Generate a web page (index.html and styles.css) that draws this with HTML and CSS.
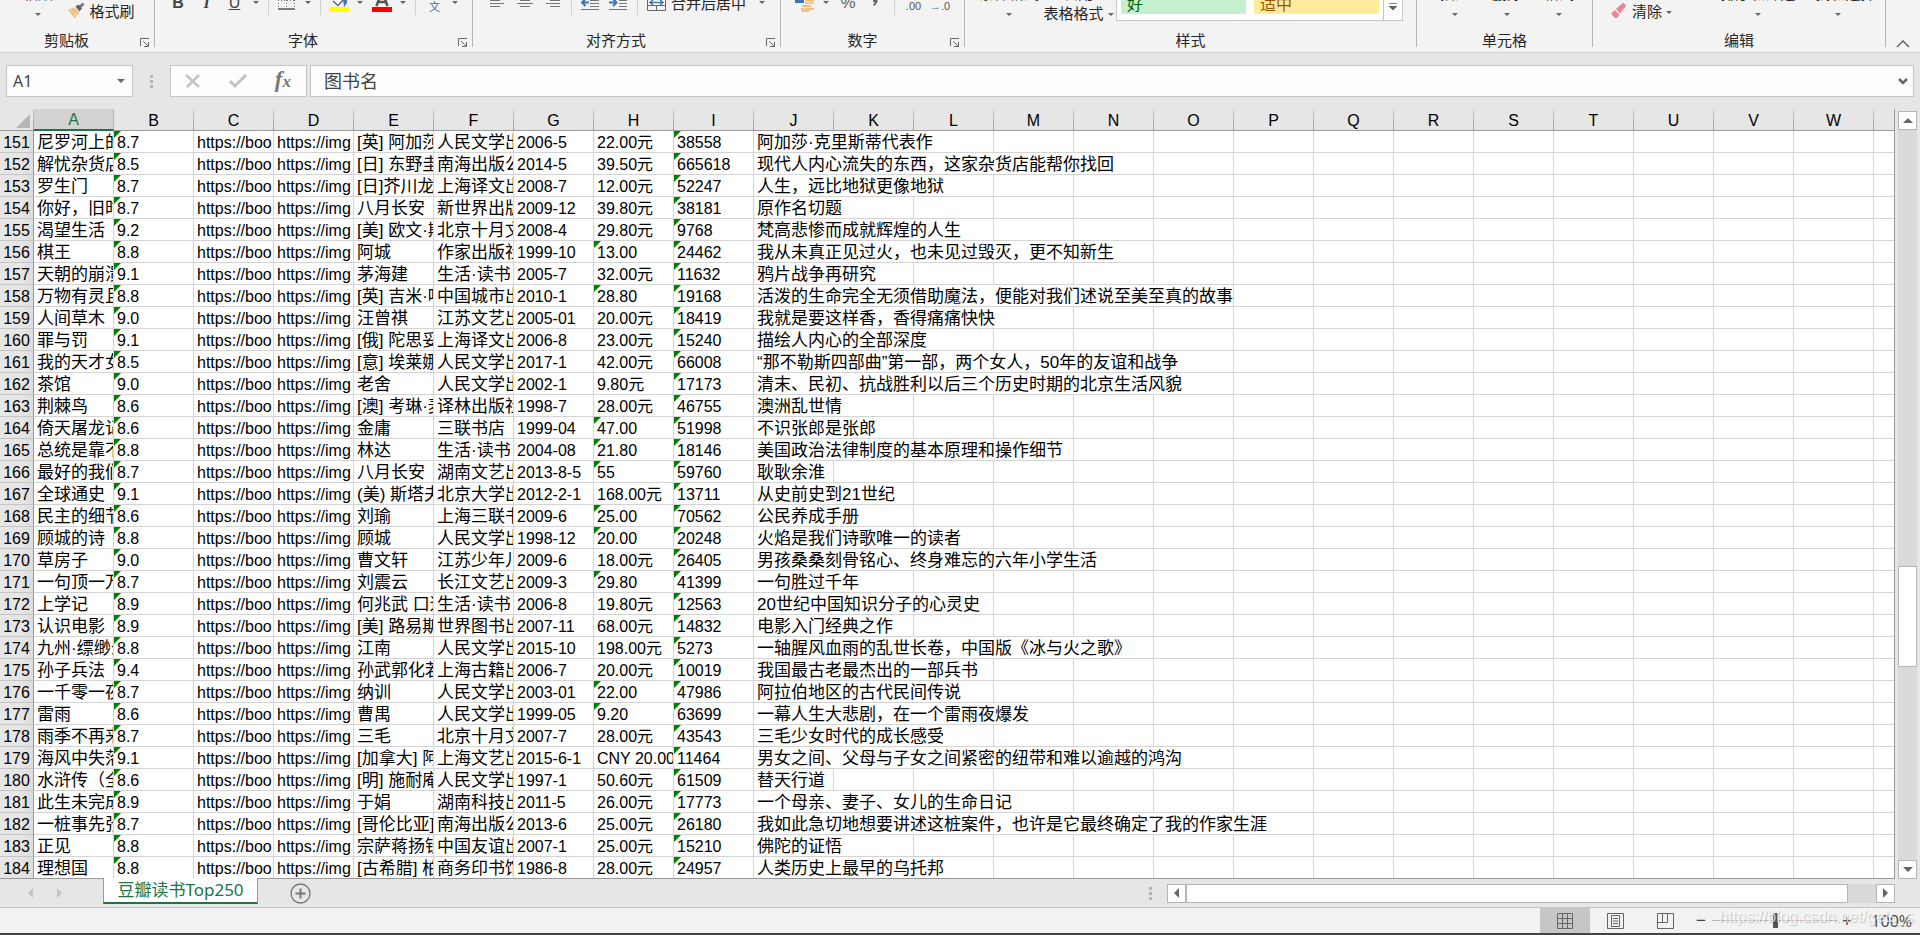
FILE: index.html
```html
<!DOCTYPE html>
<html lang="zh-CN">
<head>
<meta charset="utf-8">
<title>豆瓣读书Top250</title>
<link rel="stylesheet" href="styles.css">
</head>
<body>
<header class="ribbon">
  <section class="group group-clipboard">
    <div class="tools">
      <button class="stack"><span>粘贴</span><i class="caret"></i></button>
      <span></span>
      <button class="labelled">
        <svg class="icon" width="18" height="20" viewBox="0 0 18 20"><path d="M1 9.500 7.500 7.500l5 5-5 6z" fill="#eec07c"/><path d="M3 10l8 5M6 17l5-5" stroke="#f8dcae" stroke-width="1"/><path d="M8.500 6.500l3-2 3.500 4-2.500 3z" fill="#5f5f5f"/><path d="M12 6l3.500-3.500 2 2L14 8z" fill="#777"/></svg>
        <span>格式刷</span>
      </button>
    </div>
    <h2>剪贴板</h2>
    <button class="launcher" aria-label="剪贴板设置"><svg width="10" height="9" viewBox="0 0 10 9"><path d="M.5 8V.5H9M3 3l5 5M8.500 4v4.500H4" fill="none" stroke="#666"/></svg></button>
  </section>
  <section class="group group-font">
    <div class="tools">
      <button class="glyph bold">B</button>
      <button class="glyph italic">I</button>
      <button class="glyph underline">U</button>
      <i class="caret high"></i><i class="sep"></i>
      <button aria-label="边框"><svg class="icon" width="18" height="20" viewBox="0 0 18 20"><path d="M1.500 0v8M9.500 0v8M17.500 0v8M1 .5h16" stroke="#777" stroke-dasharray="1 2"/><path d="M1 9h17" stroke="#555" stroke-width="1.500"/></svg></button>
      <i class="caret high"></i><i class="sep"></i>
      <button aria-label="填充颜色"><svg class="icon" width="20" height="20" viewBox="0 0 20 20"><path d="M4 1l5 4.500L15-1" fill="#fff" stroke="#666" stroke-width="1.500"/><path d="M14-1l4 1v3l-3 4z" fill="#3f74b5"/><path d="M0 7h20v5H0z" fill="#ff0"/></svg></button>
      <i class="caret high"></i>
      <button aria-label="字体颜色"><svg class="icon" width="20" height="20" viewBox="0 0 20 20"><path d="M4.500 6L7-1M15.500 6L13-1M6 2h8" fill="none" stroke="#555" stroke-width="2.500"/><path d="M0 7h20v5H0z" fill="#f00"/></svg></button>
      <i class="caret high"></i><i class="sep"></i>
      <button class="phonetic">文</button>
      <i class="caret high"></i>
    </div>
    <h2>字体</h2>
    <button class="launcher" aria-label="字体设置"><svg width="10" height="9" viewBox="0 0 10 9"><path d="M.5 8V.5H9M3 3l5 5M8.500 4v4.500H4" fill="none" stroke="#666"/></svg></button>
  </section>
  <section class="group group-align">
    <div class="tools">
      <button aria-label="左对齐"><svg class="icon" width="14" height="20" viewBox="0 0 14 20"><path d="M0 .5h10M0 3.500h14M0 6.500h10" stroke="#777"/></svg></button>
      <button aria-label="居中"><svg class="icon" width="16" height="20" viewBox="0 0 16 20"><path d="M3 .5h10M0 3.500h16M3 6.500h10" stroke="#777"/></svg></button>
      <button aria-label="右对齐"><svg class="icon" width="14" height="20" viewBox="0 0 14 20"><path d="M4 .5h10M0 3.500h14M4 6.500h10" stroke="#777"/></svg></button>
      <i class="sep"></i>
      <button aria-label="减少缩进"><svg class="icon" width="18" height="20" viewBox="0 0 18 20"><path d="M9 0.500h9M9 3.500h9M9 6.500h9M0 9.500h18" stroke="#777"/><path d="M8 2.500H2M4.500-1L1 2.500 4.500 6" fill="none" stroke="#3f74b5" stroke-width="2"/></svg></button>
      <button aria-label="增加缩进"><svg class="icon" width="18" height="20" viewBox="0 0 18 20"><path d="M10 .5h8M10 3.500h8M10 6.500h8M0 9.500h18" stroke="#777"/><path d="M0 2.500h7M4-1l3.500 3.500L4 6" fill="none" stroke="#3f74b5" stroke-width="2"/></svg></button>
      <i class="sep"></i>
      <button aria-label="合并"><svg class="icon" width="19" height="20" viewBox="0 0 19 20"><path d="M.5 0v10.500h18V0M.5 5.500h18M9.500 6v5" fill="none" stroke="#666"/><path d="M1 0h17v5H1z" fill="#fff"/><path d="M3 2.500h13M6 0L3 2.500 6 5M13 0l3 2.500L13 5" fill="none" stroke="#3f74b5" stroke-width="1.500"/></svg></button>
      <button class="merge-label">合并后居中</button>
      <i class="caret high"></i>
    </div>
    <h2>对齐方式</h2>
    <button class="launcher" aria-label="对齐设置"><svg width="10" height="9" viewBox="0 0 10 9"><path d="M.5 8V.5H9M3 3l5 5M8.500 4v4.500H4" fill="none" stroke="#666"/></svg></button>
  </section>
  <section class="group group-number">
    <div class="tools">
      <button aria-label="会计格式"><svg class="icon" width="19" height="20" viewBox="0 0 19 20"><path d="M0-1h9v4H0z" fill="#3f74b5"/><path d="M10 0h9v4h-9zM7 5h9v2H7zM10 8h9v2h-9zM6 8h3v3H6zM7 10h7v2H7z" fill="#edbf79"/><path d="M10 2h9M7 7.500h10" stroke="#fbe6c3"/></svg></button>
      <i class="caret high"></i>
      <button class="glyph percent">%</button>
      <button aria-label="千位分隔"><svg class="icon" width="8" height="20" viewBox="0 0 8 20"><path d="M2-1h4.500v3L3.500 6 2 5l2-3H2z" fill="#666"/></svg></button>
      <i class="sep"></i>
      <button class="decimal">.00</button>
      <button class="decimal"><b>→</b>.0</button>
    </div>
    <h2>数字</h2>
    <button class="launcher" aria-label="数字设置"><svg width="10" height="9" viewBox="0 0 10 9"><path d="M.5 8V.5H9M3 3l5 5M8.500 4v4.500H4" fill="none" stroke="#666"/></svg></button>
  </section>
  <section class="group group-style">
    <div class="tools">
      <button class="stack"><span>条件格式</span><i class="caret"></i></button>
      <button class="two-line"><span>套用</span><span>表格格式<i class="caret"></i></span></button>
      <div class="gallery">
        <button class="swatch good">好</button>
        <button class="swatch neutral">适中</button>
        <button class="more" aria-label="更多样式"><i class="caret"></i></button>
      </div>
    </div>
    <h2>样式</h2>
  </section>
  <section class="group group-cells">
    <div class="tools">
      <button class="stack"><span>插入</span><i class="caret"></i></button>
      <button class="stack"><span>删除</span><i class="caret"></i></button>
      <button class="stack"><span>格式</span><i class="caret"></i></button>
    </div>
    <h2>单元格</h2>
  </section>
  <section class="group group-edit">
    <div class="tools">
      <button class="labelled">
        <svg class="icon" width="18" height="20" viewBox="0 0 18 20"><path d="M6 9l6-5.500q1.500-1 3 .5t.5 3L10 13.500zM5 10l4.500 5L7.500 17.500Q6 19 4.500 17.500L2 15q-1-1.500 0-2.500z" fill="#e8879b"/></svg>
        <span>清除</span><i class="caret"></i>
      </button>
      <span></span>
      <button class="stack"><span>排序和筛选</span><i class="caret"></i></button>
      <button class="stack"><span>查找和选择</span><i class="caret"></i></button>
    </div>
    <h2>编辑</h2>
  </section>
  <button class="collapse" aria-label="折叠功能区"><svg width="14" height="8" viewBox="0 0 14 8"><path d="M1 7l6-6 6 6" fill="none" stroke="#555" stroke-width="1.300"/></svg></button>
</header>

<div class="formula-bar">
  <div class="name-box"><input aria-label="名称框" value="A1"><i class="caret"></i></div>
  <i class="grip"></i>
  <div class="formula-actions">
    <button aria-label="取消"><svg width="16" height="14" viewBox="0 0 16 14"><path d="M1 1l13 12M14 1L2 13" stroke="#c3c3c3" stroke-width="2.500"/></svg></button>
    <button aria-label="输入"><svg width="18" height="14" viewBox="0 0 18 14"><path d="M1 7l5 5L17 1" fill="none" stroke="#c3c3c3" stroke-width="3"/></svg></button>
    <button class="fx"><span>f</span><small>x</small></button>
  </div>
  <div class="formula-field">
    <input aria-label="编辑栏" value="图书名">
    <button aria-label="展开编辑栏"><svg width="10" height="7" viewBox="0 0 10 7"><path d="M1 1l4 4 4-4" fill="none" stroke="#666" stroke-width="2.500"/></svg></button>
  </div>
</div>

<main class="workspace">
  <div class="sheet">
    <table>
      <colgroup id="cols"><col class="row-col"></colgroup>
      <thead><tr id="head"><th class="corner"><svg width="14" height="14" viewBox="0 0 14 14"><path d="M14 0v14H0z" fill="#b5b5b5"/></svg></th></tr></thead>
      <tbody id="rows"></tbody>
    </table>
  </div>
  <div class="vscroll">
    <button aria-label="向上"><i class="tri up"></i></button>
    <div class="track"><span class="before"></span><span class="thumb"></span><span class="after"></span></div>
    <button aria-label="向下"><i class="tri down"></i></button>
  </div>
</main>

<nav class="tab-bar">
  <button class="tab-nav" aria-label="上一张"><i class="tri left"></i></button>
  <button class="tab-nav" aria-label="下一张"><i class="tri right"></i></button>
  <button class="sheet-tab">豆瓣读书Top250</button>
  <button class="add-sheet" aria-label="新工作表"><svg width="21" height="21" viewBox="0 0 21 21"><circle cx="10.500" cy="10.500" r="9.500" fill="none" stroke="#777" stroke-width="1.300"/><path d="M10.500 5.500v10M5.500 10.500h10" stroke="#777" stroke-width="2"/></svg></button>
  <i class="grip"></i>
  <div class="hscroll">
    <button aria-label="向左"><i class="tri left"></i></button>
    <div class="track"><span class="thumb"></span></div>
    <button aria-label="向右"><i class="tri right"></i></button>
  </div>
</nav>

<footer class="status-bar">
  <button class="view active" aria-label="普通"><svg width="16" height="16" viewBox="0 0 16 16"><path d="M.5.5h15v15H.5zM5.500 0v16M10.500 0v16M0 5.500h16M0 10.500h16" fill="none" stroke="#666"/></svg></button>
  <button class="view" aria-label="页面布局"><svg width="17" height="16" viewBox="0 0 17 16"><path d="M.5.5h16v15H.5zM4.500 2.500h8v11h-8zM6 5.500h5M6 8h5M6 10.500h5" fill="none" stroke="#666"/></svg></button>
  <button class="view" aria-label="分页预览"><svg width="17" height="16" viewBox="0 0 17 16"><path d="M.5.5h16v15H.5zM.5 9.500h10V.5M5.500.5v9" fill="none" stroke="#666"/></svg></button>
  <div class="zoom">
    <button aria-label="缩小">−</button>
    <input type="range" min="0" max="100" value="50" aria-label="缩放">
    <button aria-label="放大">+</button>
    <output>100%</output>
  </div>
  <span class="watermark">https://blog.csdn.net/gets_s</span>
</footer>
<script src="sheet.js"></script>
</body>
</html>
```
FILE: styles.css
```css
* { box-sizing: border-box; }
body {
  margin: 0;
  height: 100vh;
  display: flex;
  flex-direction: column;
  overflow: hidden;
  background: #e6e6e6;
  color: #262626;
  font-family: "Noto Sans CJK SC", sans-serif;
  font-size: 15px;
  border-bottom: 2px solid #444;
}
button {
  margin: 0;
  padding: 0;
  border: 0;
  background: none;
  color: inherit;
  font: inherit;
}
svg { display: block; overflow: visible; }
input { min-width: 0; border: 0; outline: 0; background: none; }

.caret {
  display: inline-block;
  flex: none;
  border: 3px solid transparent;
  border-top-color: #666;
  border-bottom: 0;
}
.caret.high { margin-bottom: 16px; }
.sep { width: 1px; height: 15px; margin-bottom: 5px; background: #d0d0d0; }
.grip { width: 3px; height: 13px; background: repeating-linear-gradient(#b5b5b5 0 3px, transparent 3px 5px); }

/* Ribbon: the upper part of each tool row runs off the top of the window */
.ribbon {
  display: flex;
  flex: none;
  height: 53px;
  overflow: hidden;
  background: #f3f3f3;
  border-bottom: 1px solid #d0d0d0;
}
.group { position: relative; flex: none; height: 47px; border-right: 1px solid #b5b5b5; }
.tools { display: grid; align-items: end; justify-items: center; height: 20px; grid-template-rows: 20px; }
.group h2 { margin: 9px 0 0; font-size: 15px; font-weight: 400; line-height: 21px; text-align: center; }
.launcher { position: absolute; right: 4px; bottom: 0; }
.group-clipboard h2, .group-font h2, .group-align h2 { padding-right: 21px; }
.group-number h2 { padding-right: 20px; }

.group-clipboard { width: 155px; }
.group-clipboard .tools { padding-left: 18px; grid-template-columns: 40px 6px 74px; }
.group-font { width: 318px; }
.group-font .tools { padding-left: 9px; grid-template-columns: 28px 29px 27px 16px 8px 28px 16px 8px 29px 14px 30px 12px 12px 27px 14px; }
.group-align { width: 308px; }
.group-align .tools { padding-left: 10px; grid-template-columns: 28px 28px 28px 8px 29px 28px 11px 27px 77px 30px; }
.group-number { width: 184px; }
.group-number .tools { padding-left: 10px; grid-template-columns: 27px 16px 28px 26px 12px 27px 26px; }
.group-style { width: 452px; }
.group-style .tools { padding-left: 12px; grid-template-columns: 64px 75px 287px; }
.group-cells { width: 176px; }
.group-cells .tools { padding-left: 12px; grid-template-columns: 52px 52px 52px; }
.group-edit { width: 293px; }
.group-edit .tools { padding-left: 12px; grid-template-columns: 72px 41px 80px 80px; }

.stack { display: flex; flex-direction: column; align-items: center; gap: 10px; line-height: 20px; padding-bottom: 4px; white-space: nowrap; }
.labelled { display: flex; align-items: center; gap: 4px; line-height: 20px; white-space: nowrap; }
.labelled span { margin-bottom: -2px; }
.labelled .caret { margin-top: 5px; }
.two-line { display: flex; flex-direction: column; align-items: center; line-height: 20px; margin-bottom: -3px; white-space: nowrap; }
.two-line .caret { margin-left: 4px; vertical-align: 3px; }
.glyph { font-family: "Liberation Sans", sans-serif; font-size: 16px; line-height: 18px; padding-bottom: 8px; color: #444; }
.bold { font-weight: 700; }
.italic { font-family: "Liberation Serif", serif; font-style: italic; font-weight: 700; }
.underline { text-decoration: underline; }
.percent { font-size: 17px; color: #666; }
.phonetic { color: #3f74b5; font-size: 11px; line-height: 14px; padding-bottom: 7px; }
.merge-label { line-height: 20px; padding-bottom: 7px; }
.decimal { font-family: "Liberation Sans", sans-serif; font-size: 11px; line-height: 12px; padding-bottom: 8px; color: #555; white-space: nowrap; }
.decimal b { color: #3f74b5; }

.gallery { display: flex; align-items: flex-end; width: 287px; height: 31px; margin-bottom: -1px; border: 1px solid #c6c6c6; background: #fff; }
.swatch { display: flex; align-items: flex-end; width: 125px; height: 30px; margin: 0 0 6px 4px; padding: 0 0 1px 6px; font-size: 16px; line-height: 20px; }
.swatch + .swatch { margin-left: 8px; }
.good { background: #c6efce; color: #006100; }
.neutral { background: #ffeb9c; color: #9c5700; }
.more { align-self: stretch; display: flex; align-items: flex-end; justify-content: center; flex: 1; margin-left: 4px; padding-bottom: 10px; border-left: 1px solid #c6c6c6; }
.more .caret { width: 8px; height: 7px; border: 0; background: linear-gradient(#888, #888) top / 8px 1px no-repeat, linear-gradient(#666, #666) 50% 3px / 8px 1px no-repeat, linear-gradient(#666, #666) 50% 4px / 6px 1px no-repeat, linear-gradient(#666, #666) 50% 5px / 4px 1px no-repeat, linear-gradient(#666, #666) 50% 6px / 2px 1px no-repeat; }
.collapse { margin-left: auto; align-self: flex-end; padding: 0 10px 4px 0; }

/* Formula bar */
.formula-bar { display: flex; align-items: center; flex: none; height: 56px; padding: 0 6px; }
.name-box, .formula-actions, .formula-field { display: flex; align-items: center; height: 32px; border: 1px solid #c6c6c6; background: #fdfdfd; }
.name-box { width: 127px; padding: 0 7px 0 6px; }
.name-box input { flex: 1; padding: 0; font: 16px "Noto Sans", sans-serif; color: #444; }
.name-box .caret { border-width: 4px 4px 0; }
.formula-bar .grip { margin: 0 17px; }
.formula-actions { width: 137px; margin-right: 3px; justify-content: space-between; padding: 0 15px 0 14px; }
.fx { display: flex; align-items: baseline; font: italic 700 23px/28px "Liberation Serif", serif; color: #777; }
.fx small { font-size: 17px; }
.formula-field { flex: 1; padding: 0 5px 0 13px; }
.formula-field input { flex: 1; height: 28px; padding: 0 0 2px; font: 18px "Noto Sans CJK SC", sans-serif; color: #444; }

/* Worksheet */
.workspace { display: flex; flex: 1; min-height: 0; }
.sheet { flex: 1; min-width: 0; overflow: hidden; border-right: 1px solid #999; border-bottom: 1px solid #999; background: #fff; }
table { width: 1954px; table-layout: fixed; border-collapse: separate; border-spacing: 0; font-family: "Liberation Sans", "Noto Sans CJK SC", sans-serif; font-size: 16px; color: #000; }
.row-col { width: 34px; }
.data-col { width: 80px; }
th { height: 22px; padding: 2px 0 0; font-weight: 400; line-height: 19px; background: #e6e6e6; }
thead th { border-bottom: 1px solid #999; border-right: 1px solid; border-image: linear-gradient(#d0d0d0, #999) 1; }
thead th.selected { line-height: 18px; background: #d2d2d2; color: #217346; border-image: none; border-right-color: #b5b5b5; border-bottom: 2px solid #217346; }
.corner svg { margin: 0 0 0 16px; }
tbody th { border-right: 1px solid #999; border-bottom: 1px solid #c6c6c6; background: linear-gradient(90deg, #e6e6e6 60%, #dcdcdc); }
td { position: relative; height: 22px; padding: 2px 0 0 3px; border-right: 1px solid #d4d4d4; border-bottom: 1px solid #d4d4d4; line-height: 19px; white-space: nowrap; overflow: hidden; }
td.han { font-size: 17px; }
td.flag::before { content: ""; position: absolute; left: 0; top: 0; border-top: 7px solid #008000; border-right: 7px solid transparent; }

.vscroll { display: flex; flex-direction: column; width: 25px; padding: 2px 3px 0; }
.vscroll button, .hscroll button { display: flex; align-items: center; justify-content: center; flex: none; width: 19px; height: 19px; border: 1px solid #b5b5b5; background: #fff; }
.vscroll .track { display: flex; flex-direction: column; flex: 1; width: 19px; background: #dadada; }
.vscroll .before { flex: 438; }
.vscroll .thumb { flex: 99; }
.vscroll .after { flex: 194; }
.thumb { border: 1px solid #b5b5b5; background: #fff; }
.tri { border: 5px solid transparent; }
.tri.up { border-bottom-color: #666; border-top: 0; }
.tri.down { border-top-color: #666; border-bottom: 0; }
.tri.left { border-right-color: #666; border-left: 0; }
.tri.right { border-left-color: #666; border-right: 0; }

/* Sheet tabs */
.tab-bar { display: flex; align-items: center; flex: none; height: 28px; padding-right: 25px; }
.tab-nav { width: 5px; margin-left: 28px; }
.tab-nav + .tab-nav { margin-left: 24px; }
.tab-nav .tri { display: block; }
.tab-nav .left { border-right-color: #c3c3c3; }
.tab-nav .right { border-left-color: #c3c3c3; }
.sheet-tab { align-self: flex-start; width: 155px; height: 26px; margin: -1px 0 0 41px; border: 1px solid #999; border-top: 0; border-bottom: 2px solid #217346; background: #fff; color: #217346; font-size: 17px; line-height: 22px; white-space: nowrap; font-family: "Noto Sans", "Noto Sans CJK SC", sans-serif; }
.add-sheet { margin-left: 32px; }
.tab-bar .grip { margin-left: auto; }
.hscroll { display: flex; width: 728px; margin-left: 15px; }
.hscroll .track { display: flex; flex: 1; background: #dadada; }
.hscroll .thumb { width: 96%; }

/* Status bar */
.status-bar { position: relative; display: flex; justify-content: flex-end; flex: none; height: 26px; padding-right: 8px; border-top: 1px solid #c6c6c6; background: #f2f2f2; }
.view { display: flex; align-items: center; justify-content: center; width: 50px; }
.view.active { background: #c6c6c6; }
.zoom { display: flex; align-items: center; width: 222px; color: #444; }
.zoom button { width: 14px; margin-left: 4px; font: 17px "Liberation Sans", sans-serif; }
.zoom button + input + button { margin-left: 2px; }
.zoom input { appearance: none; width: 126px; height: 15px; margin: 0 0 0 4px; background: linear-gradient(#b5b5b5, #b5b5b5) center / 100% 1px no-repeat; }
.zoom input::-webkit-slider-thumb { appearance: none; width: 5px; height: 15px; background: #555; }
.zoom output { margin-left: auto; font: 16px "Open Sans", sans-serif; }
.watermark { position: absolute; right: 6px; top: 0; font: 16px/18px "Liberation Sans", sans-serif; color: rgba(255, 255, 255, .75); text-shadow: 1px 1px 1px rgba(0, 0, 0, .2); pointer-events: none; }
```
FILE: sheet.js
```js
const COLUMNS = "ABCDEFGHIJKLMNOPQRSTUVWX".split("");
const FIRST_ROW = 151;

// title | rating | author | publisher | date | price | votes | quote
const BOOKS = `
尼罗河上的惨案|8.7|[英] 阿加莎·克里斯蒂|人民文学出版社|2006-5|22.00元|38558|阿加莎·克里斯蒂代表作
解忧杂货店|8.5|[日] 东野圭吾|南海出版公司|2014-5|39.50元|665618|现代人内心流失的东西，这家杂货店能帮你找回
罗生门|8.7|[日]芥川龙之介|上海译文出版社|2008-7|12.00元|52247|人生，远比地狱更像地狱
你好，旧时光|8.7|八月长安|新世界出版社|2009-12|39.80元|38181|原作名切题
渴望生活|9.2|[美] 欧文·斯通|北京十月文艺出版社|2008-4|29.80元|9768|梵高悲惨而成就辉煌的人生
棋王|8.8|阿城|作家出版社|1999-10|13.00|24462|我从未真正见过火，也未见过毁灭，更不知新生
天朝的崩溃|9.1|茅海建|生活·读书|2005-7|32.00元|11632|鸦片战争再研究
万物有灵且美|8.8|[英] 吉米·哈利|中国城市出版社|2010-1|28.80|19168|活泼的生命完全无须借助魔法，便能对我们述说至美至真的故事
人间草木|9.0|汪曾祺|江苏文艺出版社|2005-01|20.00元|18419|我就是要这样香，香得痛痛快快
罪与罚|9.1|[俄] 陀思妥耶夫斯基|上海译文出版社|2006-8|23.00元|15240|描绘人内心的全部深度
我的天才女友|8.5|[意] 埃莱娜·费兰特|人民文学出版社|2017-1|42.00元|66008|“那不勒斯四部曲”第一部，两个女人，50年的友谊和战争
茶馆|9.0|老舍|人民文学出版社|2002-1|9.80元|17173|清末、民初、抗战胜利以后三个历史时期的北京生活风貌
荆棘鸟|8.6|[澳] 考琳·麦卡洛|译林出版社|1998-7|28.00元|46755|澳洲乱世情
倚天屠龙记|8.6|金庸|三联书店|1999-04|47.00|51998|不识张郎是张郎
总统是靠不住的|8.8|林达|生活·读书|2004-08|21.80|18146|美国政治法律制度的基本原理和操作细节
最好的我们|8.7|八月长安|湖南文艺出版社|2013-8-5|55|59760|耿耿余淮
全球通史|9.1|(美) 斯塔夫里阿诺斯|北京大学出版社|2012-2-1|168.00元|13711|从史前史到21世纪
民主的细节|8.6|刘瑜|上海三联书店|2009-6|25.00|70562|公民养成手册
顾城的诗|8.8|顾城|人民文学出版社|1998-12|20.00|20248|火焰是我们诗歌唯一的读者
草房子|9.0|曹文轩|江苏少年儿童出版社|2009-6|18.00元|26405|男孩桑桑刻骨铭心、终身难忘的六年小学生活
一句顶一万句|8.7|刘震云|长江文艺出版社|2009-3|29.80|41399|一句胜过千年
上学记|8.9|何兆武 口述|生活·读书|2006-8|19.80元|12563|20世纪中国知识分子的心灵史
认识电影|8.9|[美] 路易斯·贾内梯|世界图书出版公司|2007-11|68.00元|14832|电影入门经典之作
九州·缥缈录|8.8|江南|人民文学出版社|2015-10|198.00元|5273|一轴腥风血雨的乱世长卷，中国版《冰与火之歌》
孙子兵法|9.4|孙武郭化若|上海古籍出版社|2006-7|20.00元|10019|我国最古老最杰出的一部兵书
一千零一夜|8.7|纳训|人民文学出版社|2003-01|22.00|47986|阿拉伯地区的古代民间传说
雷雨|8.6|曹禺|人民文学出版社|1999-05|9.20|63699|一幕人生大悲剧，在一个雷雨夜爆发
雨季不再来|8.7|三毛|北京十月文艺出版社|2007-7|28.00元|43543|三毛少女时代的成长感受
海风中失落的血色馈赠|9.1|[加拿大] 阿利斯泰尔|上海文艺出版社|2015-6-1|CNY 20.00|11464|男女之间、父母与子女之间紧密的纽带和难以逾越的鸿沟
水浒传（全二册）|8.6|[明] 施耐庵|人民文学出版社|1997-1|50.60元|61509|替天行道
此生未完成|8.9|于娟|湖南科技出版社|2011-5|26.00元|17773|一个母亲、妻子、女儿的生命日记
一桩事先张扬的凶杀案|8.7|[哥伦比亚] 马尔克斯|南海出版公司|2013-6|25.00元|26180|我如此急切地想要讲述这桩案件，也许是它最终确定了我的作家生涯
正见|8.8|宗萨蒋扬钦哲仁波切|中国友谊出版公司|2007-1|25.00元|15210|佛陀的证悟
理想国|8.8|[古希腊] 柏拉图|商务印书馆|1986-8|28.00元|24957|人类历史上最早的乌托邦
`.trim().split("\n").map(line => line.split("|"));

const make = (tag, text, className, parent) => {
  const el = document.createElement(tag);
  el.textContent = text;
  if (className) el.className = className;
  parent.append(el);
  return el;
};

// How many columns a long text spills over
const spanOf = text => {
  const width = [...text].reduce((sum, ch) => sum + (/[\d“”·]/.test(ch) ? 8 : 17), 3);
  return Math.ceil(width / 80);
};

COLUMNS.forEach((letter, i) => {
  make("col", "", "data-col", document.getElementById("cols"));
  make("th", letter, i === 0 ? "selected" : "", document.getElementById("head"));
});

BOOKS.forEach(([title, rating, author, press, date, price, votes, quote], i) => {
  const tr = make("tr", "", "", document.getElementById("rows"));
  make("th", FIRST_ROW + i, "", tr);
  make("td", title, "han", tr);
  make("td", rating, "flag", tr);
  make("td", "https://boo", "", tr);
  make("td", "https://img", "", tr);
  make("td", author, "han", tr);
  make("td", press, "han", tr);
  make("td", date, "", tr);
  make("td", price, /^[\d.]+$/.test(price) ? "flag" : "", tr);
  make("td", votes, "flag", tr);
  const span = spanOf(quote);
  make("td", quote, "han", tr).colSpan = span;
  for (let c = 9 + span; c < COLUMNS.length; c++) make("td", "", "", tr);
});
```
